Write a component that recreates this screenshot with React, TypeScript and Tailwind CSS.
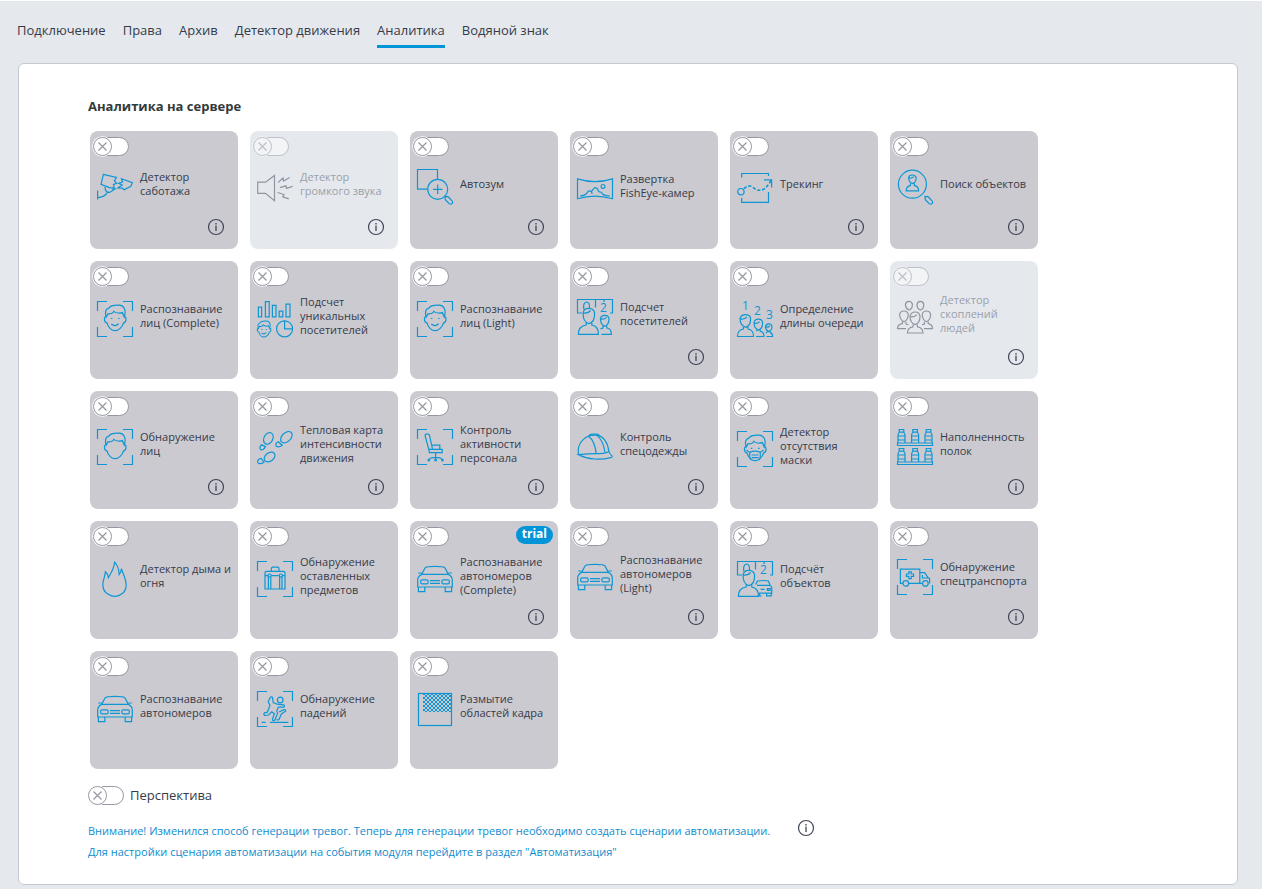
import type { ReactNode } from "react";
import clsx from "clsx";

const tabs = [
  "Подключение",
  "Права",
  "Архив",
  "Детектор движения",
  "Аналитика",
  "Водяной знак",
];

const Frame = () => (
  <path d="M.5 10V.5H10M26 .5H35.5V10M35.5 26V35.5H26M10 35.5H.5V26" />
);

const Head = () => (
  <>
    <path d="M9.2 15.5C6.5 15.5 7 21.8 10 21.8C11 26 14.5 29.7 18 29.7C21.5 29.7 25.5 26 26.5 21.8C29.5 21.8 30 15.5 27.2 15.5" />
    <path d="M9.2 16C7.6 11.5 8.6 8 11.5 7.4C13.5 4 18 4.2 21.5 4.2C26.5 3.8 29.8 9 27.2 16L25.4 11.6C22.5 12.6 18.5 12 16.8 10.4C16.2 12.4 13 13.2 11 12.6Z" />
  </>
);

const Smile = () => (
  <path d="M13.8 17.5h1.6M21 17.5h1.6M14.3 23q3.8 3.4 7.4-.4" />
);

const Car = () => (
  <>
    <path d="M4.6 13.4L8 7Q9 5.4 18 5.4T28 7l3.4 6.4M4.6 13.4h26.8M4.5 12H1.2M31.5 12h3.3M4.6 13.4Q.7 15.5.7 19v7h34.6v-7q0-3.5-3.9-5.6" />
    <path d="M1.4 26v4.6h6.4V26M28.2 26v4.6h6.4V26M13 19.6h10M13 22.4h10" />
    <rect x="3.6" y="18.8" width="7.6" height="4" rx="1.6" />
    <rect x="24.8" y="18.8" width="7.6" height="4" rx="1.6" />
  </>
);

const Handle = () => (
  <path d="M27.4 26.8l1.8 1.8M28.6 31q-1.4-1.6 0-3t2.8 0l3.6 3.8q1.4 1.6 0 2.8t-2.8 0z" />
);

const Digit = ({ x, y, children }: { x: number; y: number; children: string }) => (
  <text x={x} y={y} fontSize="12" fill="currentColor" stroke="none">
    {children}
  </text>
);

const Bottle = ({ x, y }: { x: number; y: number }) => (
  <g transform={`translate(${x} ${y})`}>
    <path d="M1.8.5h4.6v2.6H1.8zM2 3.1Q.6 4.6.6 6v8M6.2 3.1Q7.6 4.6 7.6 6v8M.6 7h7M.6 11h7" />
  </g>
);

// Half-hidden counter board with a person in front of it
const BoardPerson = () => (
  <>
    <path d="M5 14H.5V.5H35.5V14H33M18.5.5V8.4M27 .5V3" />
    <path d="M7 10.5Q5.6 4 9.4 3q3.4 0 3.2 6.4" />
    <Digit x={23} y={13}>2</Digit>
    <path d="M6.2 13.6Q7 9.2 12 9.4t5.6 4.8q.4 8.8-5.8 10.4Q5.6 22.6 6.2 13.6zM6.2 14q5 .8 7.4-2.6M9.2 23.6V26Q1.4 27 1.4 35.4H21.4Q21.4 27 14.8 26v-2.4" />
  </>
);

const icons: Record<string, ReactNode> = {
  sabotage: (
    <>
      <path d="M6.4 5.4L19.4 8.4l-2 3.6 2.2 2-3.2 1.6.8 3L13 18.8 4 15.4 5.4 9.6Z" />
      <path d="M24.4 9.8l11 3.8-1.6 3.8-6.6 3.4-2-1.6-4.4-.2 4.4-3-3.6-1.6 4-1.4z" />
      <path d="M.6 21.6v9M.6 28.6Q7.6 28.4 10.4 23.4M8 18q0 5.4 4.5 5.4L17.4 20.6M15 19.8h4" />
    </>
  ),
  sound: (
    <path d="M.7 13.2H8.5L17.5 6.4V31.8L8.5 24.4H.7ZM21 13.6l5-4.6.6 3L32.5 8.6M22.8 18.6l6.2-1.8.4 2.6 6.2-2M20.5 23.5l6.5 2-1.2 2.4 6 2" />
  ),
  zoom: (
    <>
      <path d="M20.5 10V.5H.5V20.2H10.5M16 20.3h9.4M20.7 15.6V25" />
      <circle cx="20.7" cy="20.3" r="10" />
      <Handle />
    </>
  ),
  fisheye: (
    <>
      <path d="M.5 7.9Q18 13.4 35.5 7.9V27.8Q18 22.4.5 27.8Z" />
      <path d="M3 25Q8 25 10.4 21.4Q12 18.8 14.4 20.8Q17 16.4 18.6 16.6Q20.4 17 21.8 20.6Q24.4 20.6 26 23.4Q29 25 33 25M14.4 20.8l.8 2" />
      <circle cx="26" cy="15.4" r="1.9" />
    </>
  ),
  tracking: (
    <>
      <path d="M4.7 8.4V4.5H31.5V7M4.7 29v4.3H31.5V23" />
      <circle cx="3.9" cy="22.7" r="3.2" />
      <path strokeWidth="1.6" strokeDasharray="3.2 1.8" d="M7 19.7Q10 16 15 17.5Q21 23.5 27 20Q31 17 34 11.4" />
      <path d="M27 10.8h7.6V18.4" />
    </>
  ),
  search: (
    <>
      <circle cx="15.4" cy="15.2" r="14" />
      <path d="M11.6 8.6q.4-2.6 3.6-2.6t4 2.6q0 5-3.6 6-3.8-1-4-6zM11.8 8.8q3 .8 5-1.2M13.4 14.4v2.2q-4.2.6-4.2 5.2h12.4q0-4.6-4.2-5.2v-2.2" />
      <Handle />
    </>
  ),
  face: (
    <>
      <Frame />
      <Head />
      <Smile />
    </>
  ),
  faceBlank: (
    <>
      <Frame />
      <Head />
    </>
  ),
  unique: (
    <>
      <path d="M1.4 6.2h3.2v9.6H1.4zM8.4.7h3.8v15.1H8.4zM15.4 4.4H19v11.4h-3.6zM22.2 10.2h3.6v5.6h-3.6zM29 3.2h4v12.6h-4z" />
      <g transform="translate(-4.4 17.4) scale(.63)" strokeWidth="1.6">
        <Head />
        <Smile />
      </g>
      <circle cx="27.6" cy="27.8" r="8" />
      <path d="M27.6 19.8v8h8" />
    </>
  ),
  visitors: (
    <>
      <BoardPerson />
      <path d="M23.4 19.8Q24 16.4 27.8 16.4t4.2 3.4q0 6-4.2 7.4-4.2-1.4-4.4-7.4zM23.6 20q4 .6 6-1.6M26 27v2l-2.6 1M29.8 27v2q4.6.6 4.6 6.4H24.4" />
    </>
  ),
  queue: (
    <>
      <Digit x={5} y={9}>1</Digit>
      <Digit x={17} y={13.5}>2</Digit>
      <Digit x={29} y={18}>3</Digit>
      <path d="M3 17.6Q4 13.6 8.6 13.6t5 4q.2 7-4.8 8.8Q3 24.6 3 17.6zM3 17.8q4.6 1 7-2M6.4 26v2Q.5 28.8.5 35.5h16q0-6.7-5.6-7.5v-2" />
      <path d="M17 22Q17.6 18.2 21.4 18.2t4.2 3.8q0 5.6-4 7-4.4-1.4-4.6-7zM17.2 22.2q3.6.6 5.4-1.6M19.8 28.8v1.4M23.2 28.8v1.4Q27 31 27 35.5H19" />
      <path d="M28.4 25.8Q29 22.8 31.8 22.8t3.2 3q0 3.6-3.2 4.8-3.2-1.2-3.4-4.8zM28.6 26q3 .4 4.2-1.2M30.4 30.6l-1.4 1.4M33.2 30.6v1q2.4.4 2.4 3.9H29.4" />
    </>
  ),
  crowd: (
    <>
      <path d="M8.4 5.4Q9 2.4 12 2.4t3.4 3q0 4.4-3.4 5.6-3.4-1.2-3.6-5.6zM20 5.4Q20.6 2.4 23.4 2.4t3.4 3q0 4.4-3.4 5.6Q20 9.8 20 5.4z" />
      <path d="M2.6 15.6Q3.2 12 7 12t4.2 3.6q0 5.6-4.2 7.2-4.2-1.6-4.4-7.2zM25.2 15.6Q25.8 12 29.4 12t4.2 3.6q0 5.6-4.2 7.2-4-1.6-4.2-7.2z" />
      <path d="M13 17.4Q13.8 13 18.2 13t4.8 4.4q0 6.6-4.8 8.2-5-1.6-5.2-8.2zM13.2 17.6q4.4.8 6.6-2" />
      <path d="M5.4 22.4v2.2Q.5 25.4.5 29.6H9M31.2 22.4v2.2q4.3.8 4.3 5H27M9 22.8v2.2l2.4.8M27.4 22.8v2.2l-2.4.8M16 25.4v2.4Q10.4 28.6 10.4 34h15.6q0-5.4-5.6-6.2v-2.4" />
    </>
  ),
  steps: (
    <>
      <ellipse cx="11.4" cy="9.4" rx="4.4" ry="6.2" transform="rotate(28 11.4 9.4)" />
      <path d="M4.4 15.8q-2.6 2.8-.8 4.6 2.4 1.8 4.8-2.8z" />
      <ellipse cx="29.4" cy="8.2" rx="4.4" ry="6.8" transform="rotate(46 29.4 8.2)" />
      <path d="M21.2 12.8q-3.4 1.6-2 4.2 2.2 2 6-.8z" />
      <ellipse cx="12.6" cy="28" rx="4.2" ry="6" transform="rotate(52 12.6 28)" />
      <path d="M4.2 29.4q-4.4 1-3.4 4.2 2 2.4 6.2-.4z" />
    </>
  ),
  chair: (
    <>
      <Frame />
      <path d="M8 6.4q0-1.2 1.2-1.2h2q1 0 1.3 1.2L15.6 20.4H11.8zM11.8 20.4l.6 3.2h12.8v-3.2H15.6M14.8 16.2h8v4.2M18.6 23.6v4.8M11.6 31q1.4-2.6 7-2.6t7 2.6M18.6 28.4v2" />
      <circle cx="11.8" cy="31.2" r=".8" />
      <circle cx="18.6" cy="31.2" r=".8" />
      <circle cx="25.4" cy="31.2" r=".8" />
    </>
  ),
  helmet: (
    <>
      <path d="M1.4 25.6C-.4 13.6 8.4 6.2 18 6.2C27 6.2 31 14.4 31.8 22.4" />
      <path d="M1.4 25.6Q13 24.4 22.6 24.6Q29.6 24.4 31.8 22.4Q33 25.6 35.2 27.2Q35.4 28.4 33.6 28.6C24 31.4 11 30.6 1.4 25.6Z" />
      <path d="M11.6 7.2Q17.8 12 19.2 24.4M11.6 7.2Q12.4 5.4 15 5.2H20Q22 5.4 22.6 7M20 6.4Q26.6 12 28 23.8" />
    </>
  ),
  mask: (
    <>
      <Frame />
      <Head />
      <path d="M13.8 17.4h1.6M21 17.4h1.6M9.4 19l3.4 2.4q5.2-2.4 10.4 0L26.6 19M12.8 21.4q-.6 6.2 1.4 7.6M23.2 21.4q.6 6.2-1.4 7.6M14.6 24h7M14.6 26.6h7" />
    </>
  ),
  shelves: (
    <>
      {[0, 19].map((y) => (
        <g key={y}>
          <Bottle x={0.4} y={y} />
          <Bottle x={14} y={y} />
          <Bottle x={27.4} y={y} />
          <path d={`M.5 ${y + 14}h35v2.5H.5z`} />
        </g>
      ))}
    </>
  ),
  fire: (
    <path d="M14 34.6C8.6 33 5.8 28.6 5.8 23.6C5.8 19 8.2 15.6 8.4 10.8Q11 13 11.4 16.6C13.6 12.6 17 8 17.6 1.2Q21.8 5.6 22.2 13.6Q24.2 11.6 24.4 7.8C26.4 14 29.2 17.4 29.2 24C29.2 29 26.2 33 21.6 34.6Q17.8 36 14 34.6Z" />
  ),
  luggage: (
    <>
      <Frame />
      <path d="M8 28V12q0-1.6 1.6-1.6h16.8q1.6 0 1.6 1.6V28zM14.4 10.4V7.6q0-1.4 1.4-1.4h4.8q1.4 0 1.4 1.4v2.8M8 14.6h3M14.4 14.6h7.4M25 14.6h3M11.4 16v12M13.8 16v12M22.6 16v12M25 16v12" />
      <circle cx="12.6" cy="14.6" r="1.6" />
      <circle cx="23.8" cy="14.6" r="1.6" />
    </>
  ),
  car: <Car />,
  objects: (
    <>
      <BoardPerson />
      <path d="M18.6 23.6l1.8-3.6q7-1 11 0l1.8 4.4M20 24.4h13.2q1.6 1 1.6 3v4.8H22M29.6 32.2v2.6h4.6v-2.6M22.6 32.2v2.6h1.8M23.6 28.4h4M30.4 27.6h2.8v1.8h-2.8z" />
    </>
  ),
  ambulance: (
    <>
      <Frame />
      <path d="M6 24.4H3.4V10.2h19.4v14.2H11.8M22.8 13.6h4.8l3.4 5 1.6 1v4.8M22.8 24.4h2.6M25.4 16v3h5.6" />
      <circle cx="8.8" cy="24.4" r="2.8" />
      <circle cx="28.4" cy="24.4" r="2.8" />
      <path d="M11.8 12.8h2.4v2.2h2.4v2.4h-2.4v2.2h-2.4v-2.2H9.4V15h2.4z" />
    </>
  ),
  fall: (
    <>
      <Frame />
      <circle cx="23.2" cy="9" r="2.8" />
      <path d="M13.4 6.2q1.4-1 2.2.4l.6 5 4 1.6 6.4.6q1.6.8.2 2.4l-5.4-.2-1.6 4 .8 2.4-3 7q-2 .6-2.2-1l2-5.6-2.6-2-3.2 3.2-4 .4q-1.4-1-.2-2.6l3-.6 2.6-7-1.8-3.4zM22 21l5-2.4q2-.2 1.6 1.6l-4.2 2.8-2.4 5.6q-1.6 1-2.4-.4" />
      <path d="M4.6 31.4h4M13 31.4h18.4" />
    </>
  ),
  blur: (
    <>
      <defs>
        <pattern id="checker" width="4" height="4" patternUnits="userSpaceOnUse">
          <path d="M0 0h2v2H0zM2 2h2v2H2z" fill="currentColor" stroke="none" />
        </pattern>
      </defs>
      <rect x="1.5" y="2.5" width="33" height="32" />
      <rect x="6" y="3" width="28" height="18" fill="url(#checker)" stroke="none" />
    </>
  ),
};

type Module = {
  icon: string;
  title: string;
  info?: boolean;
  disabled?: boolean;
  trial?: boolean;
};

const modules: Module[] = [
  { icon: "sabotage", title: "Детектор\nсаботажа", info: true },
  { icon: "sound", title: "Детектор\nгромкого звука", info: true, disabled: true },
  { icon: "zoom", title: "Автозум", info: true },
  { icon: "fisheye", title: "Развертка\nFishEye-камер" },
  { icon: "tracking", title: "Трекинг", info: true },
  { icon: "search", title: "Поиск объектов", info: true },
  { icon: "face", title: "Распознавание\nлиц (Complete)" },
  { icon: "unique", title: "Подсчет\nуникальных\nпосетителей" },
  { icon: "face", title: "Распознавание\nлиц (Light)" },
  { icon: "visitors", title: "Подсчет\nпосетителей", info: true },
  { icon: "queue", title: "Определение\nдлины очереди" },
  { icon: "crowd", title: "Детектор\nскоплений\nлюдей", info: true, disabled: true },
  { icon: "faceBlank", title: "Обнаружение\nлиц", info: true },
  { icon: "steps", title: "Тепловая карта\nинтенсивности\nдвижения", info: true },
  { icon: "chair", title: "Контроль\nактивности\nперсонала", info: true },
  { icon: "helmet", title: "Контроль\nспецодежды", info: true },
  { icon: "mask", title: "Детектор\nотсутствия\nмаски" },
  { icon: "shelves", title: "Наполненность\nполок", info: true },
  { icon: "fire", title: "Детектор дыма и\nогня" },
  { icon: "luggage", title: "Обнаружение\nоставленных\nпредметов" },
  { icon: "car", title: "Распознавание\nавтономеров\n(Complete)", info: true, trial: true },
  { icon: "car", title: "Распознавание\nавтономеров\n(Light)", info: true },
  { icon: "objects", title: "Подсчёт\nобъектов" },
  { icon: "ambulance", title: "Обнаружение\nспецтранспорта", info: true },
  { icon: "car", title: "Распознавание\nавтономеров" },
  { icon: "fall", title: "Обнаружение\nпадений" },
  { icon: "blur", title: "Размытие\nобластей кадра" },
];

function Toggle({ id, disabled }: { id: string; disabled?: boolean }) {
  return (
    <span className={clsx("inline-grid h-[19px] w-9 shrink-0", disabled && "opacity-50")}>
      <input
        id={id}
        type="checkbox"
        disabled={disabled}
        className="col-start-1 row-start-1 h-[19px] w-9 appearance-none rounded-full border border-[#9598a3] bg-white"
      />
      <svg viewBox="0 0 36 19" fill="none" className="pointer-events-none col-start-1 row-start-1 h-[19px] w-9 overflow-visible">
        <circle cx="9.5" cy="9.5" r="10.3" fill="#fff" />
        <circle cx="9.5" cy="9.5" r="9" stroke="#9598a3" />
        <path d="M5.5 5.5l8 8M13.5 5.5l-8 8" stroke="#9598a3" strokeWidth="1.2" />
      </svg>
    </span>
  );
}

function InfoButton({ className }: { className?: string }) {
  return (
    <button type="button" aria-label="Информация" className={clsx("h-4 w-4 text-[#3f4558]", className)}>
      <svg viewBox="0 0 16 16" fill="none" stroke="currentColor" className="h-4 w-4 overflow-visible">
        <circle cx="8" cy="8" r="7.5" strokeWidth="1.2" />
        <path d="M8 6.5V12M8 4v1.4" strokeWidth="1.3" />
      </svg>
    </button>
  );
}

function Tile({ id, module }: { id: string; module: Module }) {
  const { icon, title, info, disabled, trial } = module;
  return (
    <li
      className={clsx(
        "relative flex min-h-[118px] flex-col rounded-lg pt-1.5",
        disabled ? "bg-[#e5e9ee]" : "bg-[#cbcad0]",
      )}
    >
      <div className="flex h-5 pl-[3px]">
        <Toggle id={id} disabled={disabled} />
      </div>
      <label
        htmlFor={id}
        className={clsx(
          "flex items-center gap-[7px] pl-[7px]",
          info && !trial ? "h-[60px]" : "h-16",
          disabled ? "text-[#9b9fa9]" : "text-[#363b4a]",
        )}
      >
        <svg
          viewBox="0 0 36 36"
          fill="none"
          stroke="currentColor"
          strokeWidth="1.2"
          className={clsx("h-9 w-9 shrink-0 overflow-visible", disabled ? "text-[#9195a0]" : "text-[#0e96d4]")}
        >
          {icons[icon]}
        </svg>
        <span className="pb-1.5 text-[11px] leading-[14px] whitespace-pre">{title}</span>
      </label>
      {info && <InfoButton className="absolute right-3.5 bottom-3.5" />}
      {trial && (
        <span className="absolute top-[5px] right-[5px] h-[18px] rounded-full bg-[#0095d9] px-1.5 text-[12px] leading-4 font-bold text-white">
          trial
        </span>
      )}
    </li>
  );
}

export default function App() {
  return (
    <div className="flex min-h-screen flex-col border-t border-white bg-[#e5e9ee] pr-6 pb-1 pl-[17px] font-['Open_Sans','Noto_Sans',sans-serif] text-[#363b4a]">
      <nav className="flex h-[62px] gap-[17px] pt-[19px]">
        {tabs.map((tab) => (
          <a
            key={tab}
            href="#"
            className={clsx(
              "h-7 border-b-3 text-[13px] leading-5",
              tab === "Аналитика" ? "border-[#0095d9]" : "border-transparent",
            )}
          >
            {tab}
          </a>
        ))}
      </nav>
      <main className="ml-px flex-1 rounded-md border border-[#c6c9d1] bg-white px-[69px] pt-8">
        <h1 className="text-[13px] leading-5 font-bold text-[#333a3a]">Аналитика на сервере</h1>
        <ul className="mt-[15px] ml-0.5 grid max-w-[948px] grid-cols-[repeat(auto-fill,148px)] gap-3">
          {modules.map((module, i) => (
            <Tile key={i} id={`module-${i}`} module={module} />
          ))}
        </ul>
        <div className="mt-4 flex items-center gap-1.5 text-[13px] leading-5">
          <Toggle id="perspective" />
          <label htmlFor="perspective">Перспектива</label>
        </div>
        <div className="mt-[15px] flex items-start gap-7 text-[11px] leading-[21px] text-[#0e8cd0]">
          <p>
            <a href="#">Внимание! Изменился способ генерации тревог. Теперь для генерации тревог необходимо создать сценарии автоматизации.</a>
            <br />
            <a href="#">Для настройки сценария автоматизации на события модуля перейдите в раздел "Автоматизация"</a>
          </p>
          <InfoButton />
        </div>
      </main>
    </div>
  );
}
